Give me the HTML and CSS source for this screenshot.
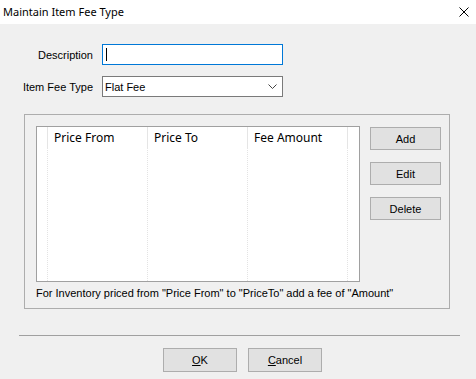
FILE: index.html
```html
<!DOCTYPE html>
<html lang="en">
  <head>
    <meta charset="UTF-8" />
    <title>Maintain Item Fee Type</title>
    <link rel="stylesheet" href="styles.css">
  </head>

  <body>
    <div class="window">
      <!-- 标题栏 -->
      <div class="titlebar">
        <span class="title">Maintain Item Fee Type</span>
        <svg class="close" width="10" height="10" viewBox="0 0 10 10">
          <path d="M0.5 0.5 L9.5 9.5 M9.5 0.5 L0.5 9.5" stroke="#000" stroke-width="1" fill="none" />
        </svg>
      </div>

      <div class="fields">
        <div class="row">
          <label>Description</label>
          <div class="textbox focused"><span class="caret"></span></div>
        </div>
        <div class="row">
          <label>Item Fee Type</label>
          <div class="textbox combo">
            <span>Flat Fee</span>
            <svg width="9" height="5" viewBox="0 0 9 5">
              <path d="M0.5 0.5 L4.5 4.5 L8.5 0.5" stroke="#444" stroke-width="1" fill="none" />
            </svg>
          </div>
        </div>
      </div>

      <div class="group">
        <div class="group-main">
          <div class="list">
            <div class="col col-first"><div class="head"></div></div>
            <div class="col"><div class="head">Price From</div></div>
            <div class="col"><div class="head">Price To</div></div>
            <div class="col"><div class="head">Fee Amount</div></div>
            <div class="col col-last"></div>
          </div>
          <div class="side">
            <button class="btn">Add</button>
            <button class="btn">Edit</button>
            <button class="btn">Delete</button>
          </div>
        </div>
        <p class="hint">For Inventory priced from "Price From" to "PriceTo" add a fee of "Amount"</p>
      </div>

      <div class="separator"></div>

      <div class="footer">
        <button class="btn btn-wide"><u>O</u>K</button>
        <button class="btn btn-wide"><u>C</u>ancel</button>
      </div>
    </div>
  </body>
</html>
```

FILE: styles.css
```css
body {
  margin: 0;
  padding: 0;
  background-color: #f0f0f0;
  font-family: "Liberation Sans", Arial, sans-serif;
  font-size: 11px;
  color: #000;
}

.window {
  width: 476px;
  height: 379px;
  overflow: hidden;
}

.titlebar {
  height: 24px;
  background-color: #fff;
  display: flex;
  align-items: center;
  justify-content: space-between;
  padding: 0 7px 0 3px;
  font-family: "Noto Sans", sans-serif;
  font-size: 11px;
}

.title {
  position: relative;
  top: -1px;
}

.fields {
  margin-top: 20px;
  display: flex;
  flex-direction: column;
  gap: 11px;
}

.row {
  display: flex;
  align-items: center;
  gap: 9px;
}

.row label {
  width: 93px;
  text-align: right;
}

.textbox {
  width: 181px;
  height: 21px;
  box-sizing: border-box;
  border: 1px solid #7a7a7a;
  background-color: #fff;
  display: flex;
  align-items: center;
  padding: 0 2px;
}

.textbox.focused {
  border-color: #0078d7;
}

.caret {
  display: block;
  width: 1px;
  height: 13px;
  background-color: #000;
  margin-left: 1px;
}

.combo {
  justify-content: space-between;
  padding: 0 5px 0 2px;
}

.group {
  margin: 17px 0 0 24px;
  width: 426px;
  height: 195px;
  box-sizing: border-box;
  border: 1px solid #adadad;
  padding: 11px 0 0 11px;
}

.group-main {
  display: flex;
  gap: 10px;
}

.list {
  width: 324px;
  height: 156px;
  box-sizing: border-box;
  border: 1px solid #a0a0a0;
  background-color: #fff;
  display: grid;
  grid-template-columns: 11px 100px 100px 100px 1fr;
  font-family: "Noto Sans", sans-serif;
  font-size: 12px;
}

.col {
  border-right: 1px dotted #e3e3e3;
}

.col-last {
  border-right: none;
}

.head {
  height: 22px;
  line-height: 22px;
  padding-left: 6px;
  margin-right: -1px;
  border-right: 1px solid #e5e5e5;
}

.side {
  display: flex;
  flex-direction: column;
  gap: 12px;
  padding-top: 1px;
}

.btn {
  width: 71px;
  height: 23px;
  box-sizing: border-box;
  border: 1px solid #adadad;
  background-color: #e1e1e1;
  font-family: "Liberation Sans", Arial, sans-serif;
  font-size: 11px;
  color: #000;
  padding: 0;
}

.hint {
  margin: 5px 0 0 0;
  line-height: 13px;
}

.separator {
  margin: 26px 0 0 19px;
  width: 441px;
  height: 1px;
  background-color: #a0a0a0;
}

.footer {
  margin-top: 12px;
  display: flex;
  gap: 11px;
  padding-left: 163px;
}

.btn-wide {
  width: 74px;
  height: 24px;
}
```
